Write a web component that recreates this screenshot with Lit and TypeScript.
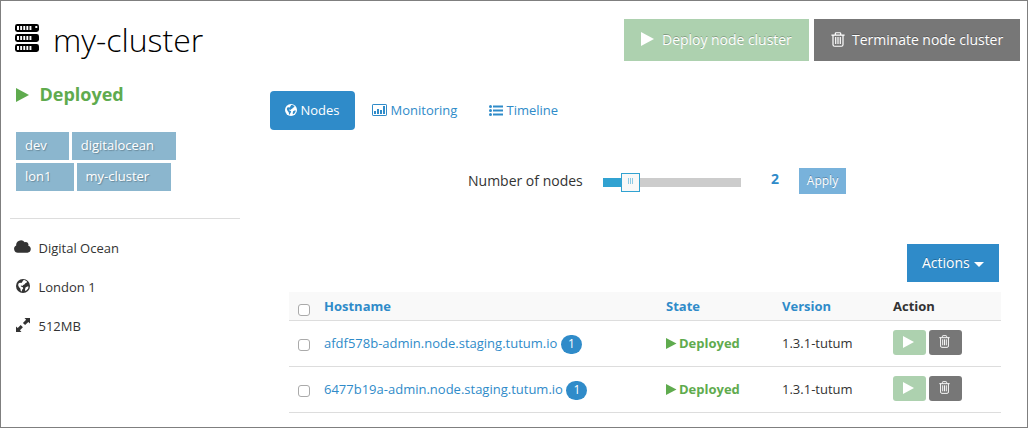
import { LitElement, html, css, svg } from "lit";
import { customElement, property, state } from "lit/decorators.js";

const icons: Record<string, { box: string; body: unknown }> = {
  server: {
    box: "0 0 24 28",
    body: svg`
      <g fill="currentColor"><rect width="24" height="8" rx="2.4"/><rect y="10" width="24" height="8" rx="2.4"/><rect y="20" width="24" height="8" rx="2.4"/></g>
      <g fill="#fff"><path d="M2 2h2v4H2zM5.200 2h1.900v4H5.200zM8.300 2h1.900v4H8.300zM11.400 2h1.900v4H11.400zM14.500 2h1.900v4H14.500zM20.300 2h2v2h-2z"/>
      <path d="M2 12h2v4H2zM5.200 12h1.900v4H5.200zM8.300 12h1.900v4H8.300zM11.400 12h1.900v4H11.400zM14.500 12h1.900v4H14.500z"/>
      <path d="M2 22h2v4H2zM5.200 22h1.900v4H5.200zM8.300 22h1.900v4H8.300zM11.400 22h1.900v4H11.400zM14.500 22h1.900v4H14.500z"/></g>`,
  },
  play: { box: "0 0 13 14", body: svg`<path fill="currentColor" d="M0 0L13 7L0 14Z"/>` },
  trash: {
    box: "0 0 14 16",
    body: svg`<g fill="none" stroke="currentColor" stroke-width="1.2"><path d="M.4 3.300H13.600M4.300 3V1.700Q4.300.8 5.200.8H8.800Q9.700.8 9.700 1.700V3M2 3.300V13.500Q2 15.200 3.600 15.200H10.400Q12 15.200 12 13.500V3.300"/><path d="M4.700 5.300V12.700M7 5.300V12.700M9.300 5.300V12.700"/></g>`,
  },
  cloud: {
    box: "0 0 17 13",
    body: svg`<path fill="currentColor" d="M3.800 12.800A3.800 3.800 0 0 1 2.200 5.600A4.700 4.700 0 0 1 10.700 2.300A2.700 2.700 0 0 1 14.300 5.800A3.600 3.600 0 0 1 13.500 12.800Z"/>`,
  },
  globe: {
    box: "0 0 14 14",
    body: svg`<circle cx="7" cy="7" r="7" fill="currentColor"/><path fill="var(--land,#fff)" d="M7.200 1.300L8.600 1.100L11 2.400L10.600 3.700L9.300 4.300L8.700 5.300L7.200 6L6.400 7L5.300 6.500L4.600 6.900L5.500 7.700L6.900 8.200L7.200 9.400L6.100 10.800L5.800 12.600L4.800 12.100L4.300 9.500L2.900 8L2.100 5.900L2.700 4.200L4.100 3.700L5.400 4.100L6.200 3Z"/><path fill="var(--land,#fff)" d="M9.500 8.400L11.200 7.500L12.600 7.500L12.100 9.400L10.600 11.300L9.200 12L9 10.400Z"/>`,
  },
  expand: {
    box: "0 0 14 14",
    body: svg`<path fill="currentColor" d="M8.500 0H14V5.500L12.300 3.900L9.100 7.100L6.900 4.900L10.100 1.700ZM5.500 14H0V8.500L1.700 10.100L4.700 7.100L6.900 9.300L3.900 12.300Z"/>`,
  },
  chart: {
    box: "0 0 15 12",
    body: svg`<rect x=".5" y=".5" width="14" height="11" rx=".6" fill="none" stroke="currentColor"/><path fill="currentColor" d="M2 7h2v3H2zM5 5h2v5H5zM8 6h2v4H8zM11 2h2v8h-2z"/>`,
  },
  list: {
    box: "0 0 14 11",
    body: svg`<g fill="currentColor"><circle cx="1.500" cy="1.500" r="1.500"/><circle cx="1.500" cy="5.500" r="1.500"/><circle cx="1.500" cy="9.500" r="1.500"/><path d="M4 .5h10v2H4zM4 4.500h10v2H4zM4 8.500h10v2H4z"/></g>`,
  },
};

@customElement("ui-icon")
export class UiIcon extends LitElement {
  @property() name = "play";
  static styles = css`
    :host { display: block; flex: none; }
    svg { display: block; width: 100%; height: 100%; overflow: visible; }
  `;
  render() {
    const i = icons[this.name];
    return html`<svg viewBox=${i.box} preserveAspectRatio="none" aria-hidden="true">${i.body}</svg>`;
  }
}

@customElement("app-root")
export class AppRoot extends LitElement {
  @state() private nodes = [
    { host: "afdf578b-admin.node.staging.tutum.io", count: 1, version: "1.3.1-tutum" },
    { host: "6477b19a-admin.node.staging.tutum.io", count: 1, version: "1.3.1-tutum" },
  ];

  static styles = css`
    :host {
      display: block; box-sizing: border-box; width: 1028px; height: 428px; overflow: hidden;
      border: 1px solid #7f7f7f; background: #fff; color: #333;
      font: 13px/20px "Open Sans", "Noto Sans", sans-serif;
    }
    * { box-sizing: border-box; }
    header { display: flex; align-items: flex-start; justify-content: space-between; padding: 18px 7px 0 14px; height: 76px; }
    .title { display: flex; align-items: flex-start; gap: 14px; color: #000; }
    .title ui-icon { width: 24px; height: 28px; margin-top: 5px; }
    h1 { margin: 0; font-weight: 300; font-size: 32px; line-height: 41px; white-space: nowrap; }
    .row { display: flex; }
    .top { gap: 5px; }
    button { font: inherit; color: #fff; border: 0; padding: 0; display: flex; align-items: center; white-space: nowrap; text-shadow: 0 -1px 0 rgba(0,0,0,.25); }
    .big { height: 42px; font-size: 14px; padding-left: 17px; letter-spacing: -.03px; }
    .deploy { background: #add1af; }
    .term { background: #777; }
    .big.deploy { width: 185px; gap: 8px; }
    .big.term { width: 206px; gap: 7px; }
    .big.deploy ui-icon { width: 13px; height: 14px; margin-top: -3px; }
    .big.term ui-icon { width: 14px; height: 15px; margin-top: -2px; }
    .main { display: grid; grid-template-columns: 230px 1fr; padding-left: 9px; }
    .status { display: flex; align-items: center; gap: 10.500px; height: 28px; margin: 3px 0 0 6px; font-size: 18px; font-weight: 700; color: #5fab4e; }
    .status ui-icon { width: 13px; height: 14px; margin-top: 1px; }
    .tags { display: flex; flex-wrap: wrap; gap: 3px; margin: 24px 0 0 6px; width: 180px; }
    .tag { height: 28px; line-height: 27px; padding: 0 22px 0 9px; background: #8bb6ce; color: #fff; text-shadow: 1px 1px 1px rgba(0,0,0,.25); white-space: nowrap; }
    hr { border: 0; border-top: 1px solid #ddd; margin: 27px 0 9px; }
    .info { display: flex; align-items: center; height: 39px; padding-left: 4px; }
    .slot { width: 17px; display: flex; justify-content: center; margin-right: 7.500px; }
    .info .cloud { width: 17px; height: 13px; margin-top: -2px; }
    .info .globe, .info .expand { width: 14px; height: 14px; margin: -2px 0 0 1px; }
    .content { padding-left: 30px; }
    .tabs { display: flex; margin-top: 14px; color: #2f8bc9; }
    .tab { display: flex; align-items: center; height: 39px; border-radius: 4px; padding: 0 0 1px 15px; }
    .tab ui-icon { margin-right: 3.500px; }
    .tab.on { width: 85px; background: #2f8bc9; color: #fff; --land: #2f8bc9; }
    .tab .globe { width: 12px; height: 12px; }
    .tab .chart { width: 15px; height: 12px; }
    .tab .list { width: 14px; height: 11px; }
    .tab.mon { width: 117px; padding-left: 17px; }
    .tab.time { padding-left: 17px; }
    .scale { display: flex; align-items: center; height: 26px; margin: 38px 0 0 198px; }
    .label { width: 135px; font-size: 14px; }
    .track { display: flex; align-items: center; width: 138px; height: 9px; margin-top: 2px; background: #ccc; }
    .fill { width: 18px; height: 9px; background: #31a2d1; }
    .grip { display: flex; justify-content: center; gap: 1px; padding-top: 4px; width: 19px; height: 19px; background: #f8f8f8; border: 1px solid #31a2d1; }
    .grip i { width: 1px; height: 6px; background: #8dcae5; }
    .value { width: 58px; padding-left: 30px; font-size: 14px; font-weight: 700; color: #2f8bc9; margin-top: -4px; }
    .apply { width: 47px; height: 26px; background: #78b2db; justify-content: center; font-size: 12px; }
    .actions { width: 92px; height: 38px; margin: 50px 28px 0 auto; padding-left: 15px; gap: 4px; background: #2f8bc9; font-size: 14px; }
    .caret { border: 5px solid transparent; border-top-color: #fff; border-bottom: 0; margin-top: 3px; }
    .table { width: 712px; margin: 10px 0 0 19px; }
    .tr { display: grid; grid-template-columns: 35px 342px 116px 111px 1fr; align-items: center; height: 46px; padding-bottom: 1px; border-bottom: 1px solid #ddd; }
    .head { height: 29px; padding: 0; background: #f9f9f9; font-weight: 700; color: #2f8bc9; }
    .head .dark { color: #333; }
    .check { appearance: none; width: 12px; height: 12px; margin: 3px 0 0 9px; border: 1px solid #aaa; border-radius: 3px; background: #fff; }
    .head .check { margin-top: 7px; }
    .host { display: flex; align-items: center; gap: 3.500px; color: #2f8bc9; }
    .badge { width: 21px; height: 19px; border-radius: 10px; background: #2f8bc9; color: #fff; font-size: 12px; line-height: 18px; text-align: center; margin-top: 2px; }
    .state { display: flex; align-items: center; gap: 2.500px; font-weight: 700; color: #5fab4e; }
    .state ui-icon { width: 10.500px; height: 11px; }
    .ops { display: flex; gap: 3px; margin-top: -2px; }
    .ops button { width: 33px; height: 25px; border-radius: 3px; justify-content: center; }
    .ops .deploy ui-icon { width: 11px; height: 12px; margin-left: -2px; margin-top: -1px; }
    .ops .term ui-icon { width: 11px; height: 13px; margin-left: -2px; margin-top: -1px; }
  `;

  render() {
    return html`
      <header>
        <div class="title"><ui-icon name="server"></ui-icon><h1>my-cluster</h1></div>
        <div class="row top">
          <button class="big deploy"><ui-icon name="play"></ui-icon><span>Deploy node cluster</span></button>
          <button class="big term"><ui-icon name="trash"></ui-icon><span>Terminate node cluster</span></button>
        </div>
      </header>
      <div class="main">
        <aside>
          <div class="status"><ui-icon name="play"></ui-icon><span>Deployed</span></div>
          <div class="tags">${["dev", "digitalocean", "lon1", "my-cluster"].map((t) => html`<span class="tag">${t}</span>`)}</div>
          <hr />
          ${[["cloud", "Digital Ocean"], ["globe", "London 1"], ["expand", "512MB"]].map(
            ([i, t]) => html`<div class="info"><span class="slot"><ui-icon class=${i} name=${i}></ui-icon></span><span>${t}</span></div>`
          )}
        </aside>
        <section class="content">
          <nav class="tabs">
            <a class="tab on"><ui-icon class="globe" name="globe"></ui-icon>Nodes</a>
            <a class="tab mon"><ui-icon class="chart" name="chart"></ui-icon>Monitoring</a>
            <a class="tab time"><ui-icon class="list" name="list"></ui-icon>Timeline</a>
          </nav>
          <div class="scale">
            <span class="label">Number of nodes</span>
            <div class="track"><div class="fill"></div><div class="grip"><i></i><i></i><i></i></div></div>
            <span class="value">2</span>
            <button class="apply">Apply</button>
          </div>
          <button class="actions">Actions<span class="caret"></span></button>
          <div class="table">
            <div class="tr head">
              <input class="check" type="checkbox" /><span>Hostname</span><span>State</span><span>Version</span><span class="dark">Action</span>
            </div>
            ${this.nodes.map(
              (n) => html`<div class="tr">
                <input class="check" type="checkbox" />
                <span class="host"><span>${n.host}</span><span class="badge">${n.count}</span></span>
                <span class="state"><ui-icon name="play"></ui-icon>Deployed</span>
                <span>${n.version}</span>
                <span class="ops"><button class="deploy"><ui-icon name="play"></ui-icon></button><button class="term"><ui-icon name="trash"></ui-icon></button></span>
              </div>`
            )}
          </div>
        </section>
      </div>
    `;
  }
}
